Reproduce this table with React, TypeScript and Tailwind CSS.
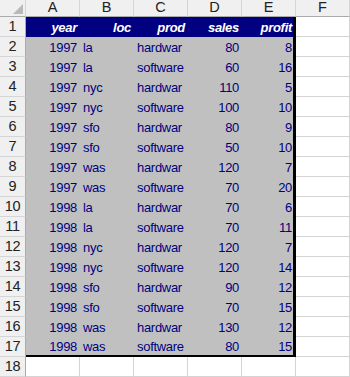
const rows: [number, string, string, number, number][] = [
  [1997, "la", "hardwar", 80, 8],
  [1997, "la", "software", 60, 16],
  [1997, "nyc", "hardwar", 110, 5],
  [1997, "nyc", "software", 100, 10],
  [1997, "sfo", "hardwar", 80, 9],
  [1997, "sfo", "software", 50, 10],
  [1997, "was", "hardwar", 120, 7],
  [1997, "was", "software", 70, 20],
  [1998, "la", "hardwar", 70, 6],
  [1998, "la", "software", 70, 11],
  [1998, "nyc", "hardwar", 120, 7],
  [1998, "nyc", "software", 120, 14],
  [1998, "sfo", "hardwar", 90, 12],
  [1998, "sfo", "software", 70, 15],
  [1998, "was", "hardwar", 130, 12],
  [1998, "was", "software", 80, 15],
];

const letters = ["A", "B", "C", "D", "E", "F"];

function RowHead({ n }: { n: number }) {
  return (
    <div className="w-[26px] shrink-0 h-full flex items-center justify-center bg-[#f0f0f0] border-r border-b border-r-[#ababab] border-b-[#d5d5d5] text-[14.5px] text-[#222] pt-[1px]">
      {n}
    </div>
  );
}

function EmptyCell() {
  return <div className="w-[54px] shrink-0 h-full border-r border-b border-[#d4d4d4] bg-white" />;
}

function DataRow({ r, n, last }: { r: (typeof rows)[number]; n: number; last: boolean }) {
  const base = "shrink-0 h-full flex items-center bg-[#c0c0c0] text-[#000080] whitespace-nowrap pt-[2px]";
  const bottom = last ? " border-b-2 border-b-black" : "";
  return (
    <div className="flex h-[20px]">
      <RowHead n={n} />
      <div className={"w-[54px] justify-end pr-[3px] " + base + bottom}>{r[0]}</div>
      <div className={"w-[54px] pl-[3px] " + base + bottom}>{r[1]}</div>
      <div className={"w-[54px] pl-[3px] " + base + bottom}>{r[2]}</div>
      <div className={"w-[54px] justify-end pr-[3px] " + base + bottom}>{r[3]}</div>
      <div className={"w-[54px] justify-end pr-[1px] border-r-[3px] border-r-black " + base + bottom}>{r[4]}</div>
      <EmptyCell />
    </div>
  );
}

export default function App() {
  return (
    <div
      className="w-[350px] h-[377px] bg-white overflow-hidden text-[13px] tracking-[-0.3px]"
      style={{ fontFamily: '"Liberation Sans", Arial, sans-serif' }}
    >
      {/* column headers */}
      <div className="flex h-[17px]">
        <div className="w-[26px] shrink-0 h-full bg-[#f0f0f0] border-r border-b border-r-[#d5d5d5] border-b-[#ababab] flex items-end justify-end pr-[2px] pb-[2px]">
          <svg width="10" height="10" viewBox="0 0 10 10">
            <polygon points="10,0 10,10 0,10" fill="#b9b9b9" />
          </svg>
        </div>
        {letters.map((l) => (
          <div
            key={l}
            className="w-[54px] shrink-0 h-full bg-[#f0f0f0] border-r border-b border-r-[#d5d5d5] border-b-[#ababab] flex items-center justify-center text-[14.5px] tracking-normal text-[#222]"
          >
            {l}
          </div>
        ))}
      </div>

      {/* row 1: field names */}
      <div className="flex h-[20px]">
        <RowHead n={1} />
        {["year", "loc", "prod", "sales"].map((h) => (
          <div key={h} className="w-[54px] shrink-0 h-full flex items-center justify-end pr-[3px] pt-[1px] bg-[#000080] text-white font-bold italic">
            {h}
          </div>
        ))}
        <div className="w-[54px] shrink-0 h-full flex items-center justify-end pr-[1px] pt-[1px] bg-[#000080] text-white font-bold italic border-r-[3px] border-r-black">
          profit
        </div>
        <EmptyCell />
      </div>

      {rows.map((r, i) => (
        <DataRow key={i} r={r} n={i + 2} last={i === rows.length - 1} />
      ))}

      {/* row 18 */}
      <div className="flex h-[20px]">
        <RowHead n={18} />
        {letters.map((l) => (
          <EmptyCell key={l} />
        ))}
      </div>
    </div>
  );
}
